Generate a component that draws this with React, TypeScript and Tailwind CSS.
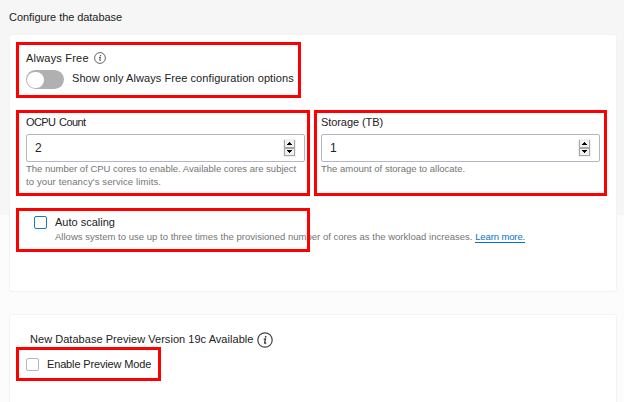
import React from "react";

function Info({ size, stroke }: { size: number; stroke: string }) {
  return (
    <svg width={size} height={size} viewBox="0 0 16 16" fill="none" className="shrink-0">
      <circle cx="8" cy="8" r="7.2" stroke={stroke} strokeWidth="1.2" />
      <circle cx="8.7" cy="4.8" r="0.9" fill="#333" />
      <path d="M6.7 7.2 L8.5 6.9 L7.6 10.8 Q7.5 11.7 9.2 10.9" stroke="#333" strokeWidth="1.2" />
    </svg>
  );
}

function Stepper() {
  return (
    <svg width="13" height="18" viewBox="0 0 13 18" shapeRendering="crispEdges">
      <path d="M0 0h13v18H0z" fill="#f0f0f0" />
      <path d="M1 1h1v16H1zM11 1h1v16h-1zM1 8h11v2H1zM1 16h11v1H1z" fill="#a6a6a6" />
      <path d="M6 3h1v1h1v1h1v1H4V5h1V4h1zM4 11h5v1H8v1H7v1H6v-1H5v-1H4z" fill="#000" />
    </svg>
  );
}

function NumberField({ label, value, children }: { label: React.ReactNode; value: string; children: React.ReactNode }) {
  return (
    <div className="w-[279px]">
      <div className="h-[19px] leading-[14px]">{label}</div>
      <div className="flex h-7 items-center justify-between rounded-[2px] border border-[#b4b7c2] pr-2 pl-2">
        <span className="text-[12px]">{value}</span>
        <Stepper />
      </div>
      <div className="text-[9.5px] leading-[13px] text-[#747474]">{children}</div>
    </div>
  );
}

function Frame({ className }: { className: string }) {
  return <div className={"pointer-events-none absolute border-[3px] border-[#ff0000] " + className} />;
}

export default function App() {
  return (
    <main className="relative flex h-[402px] w-[624px] flex-col overflow-hidden bg-[linear-gradient(#f6f6f6_215px,#fcfcfc_215px)] font-['Liberation_Sans',Arial,sans-serif] text-[11px] text-[#222] whitespace-nowrap">
      <h1 className="h-[34px] shrink-0 pt-[10px] pl-[9px] leading-[14px] tracking-[-0.06px]">Configure the database</h1>
      <section className="ml-[9px] h-[258px] w-[608px] shrink-0 rounded-[3px] border border-[#f3f3f3] bg-white pt-[15px] pl-4">
        <div className="flex h-[15px] items-center gap-[5px] leading-[14px]">
          <span className="tracking-[0.2px]">Always Free</span>
          <Info size={12} stroke="#555" />
        </div>
        <div className="mt-[5px] flex h-[19px] items-center">
          <div className="flex h-[19px] w-[38px] items-center rounded-full bg-[#b0b0b0] pl-px">
            <div className="h-4 w-[17px] rounded-full bg-white" />
          </div>
          <span className="mb-[4px] ml-2 leading-[14px] tracking-[0.08px]">Show only Always Free configuration options</span>
        </div>
        <div className="mt-[26px] flex h-[101px] gap-4">
          <NumberField label={<span className="tracking-[-0.6px] [word-spacing:1.2px]">OCPU Count</span>} value="2">
            <div>The number of CPU cores to enable. Available cores are subject</div>
            <div className="tracking-[0.12px]">to your tenancy&apos;s service limits.</div>
          </NumberField>
          <NumberField label={<span className="tracking-[-0.08px]">Storage (TB)</span>} value="1">The amount of storage to allocate.</NumberField>
        </div>
        <div className="flex gap-2 pl-2">
          <div className="h-[13px] w-[13px] rounded-[2px] border border-[#1878c8]" />
          <div>
            <div className="leading-[13px]">Auto scaling</div>
            <div className="mt-px text-[9.5px] leading-[13px] tracking-[0.02px] text-[#747474]">
              Allows system to use up to three times the provisioned number of cores as the workload increases.{" "}
              <a className="border-b border-[#0572ce] tracking-[-0.12px] text-[#0572ce]">Learn more.</a>
            </div>
          </div>
        </div>
      </section>
      <section className="mt-[22px] ml-[9px] h-[100px] w-[608px] shrink-0 rounded-[3px] border border-[#f3f3f3] bg-white pt-[17px] pl-4">
        <div className="flex h-4 items-center gap-1 pl-1">
          <span className="mb-px tracking-[0.04px]">New Database Preview Version 19c Available</span>
          <Info size={16} stroke="#444" />
        </div>
        <div className="mt-[10px] flex items-center gap-2">
          <div className="h-[13px] w-[13px] rounded-[2px] border border-[#b4b7c2]" />
          <span className="leading-[13px] tracking-[-0.15px]">Enable Preview Mode</span>
        </div>
      </section>
      <Frame className="top-[42px] left-4 h-14 w-[285px]" />
      <Frame className="top-[110px] left-4 h-[86px] w-[294px]" />
      <Frame className="top-[110px] left-[314px] h-[86px] w-[293px]" />
      <Frame className="top-[208px] left-4 h-11 w-[294px]" />
      <Frame className="top-[347px] left-4 h-[34px] w-[145px]" />
    </main>
  );
}
